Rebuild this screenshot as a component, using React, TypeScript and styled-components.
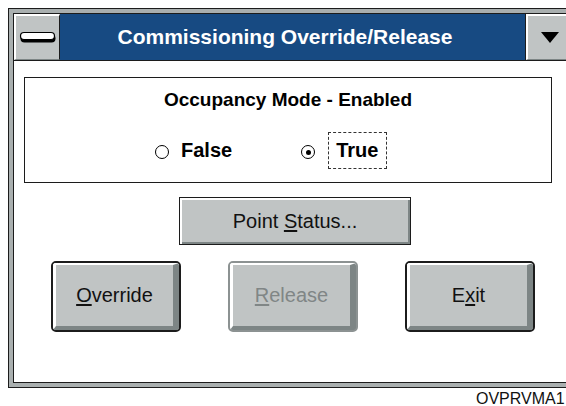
import styled, { createGlobalStyle } from "styled-components";

const COLORS = {
  DARK: "#1c1c1c",
  FRAME: "#a9afaf",
  FACE: "#c0c4c4",
  SHADOW: "#7d8585",
  TITLE: "#174a82",
  DISABLED: "#808686",
};

const GlobalStyle = createGlobalStyle`
  html, body {
    margin: 0;
    padding: 0;
    background: #fff;
    overflow: hidden;
  }
  body {
    font-family: "Liberation Sans", Arial, sans-serif;
  }
`;

const Stage = styled.div`
  padding: 8px 0 0 8px;
  width: 600px;
`;

const Window = styled.div`
  width: 570px;
  height: 380px;
  box-sizing: border-box;
  border: 1px solid ${COLORS.DARK};
  background: ${COLORS.FRAME};
  padding: 4px;
`;

const Inner = styled.div`
  height: 100%;
  box-sizing: border-box;
  border: 1px solid ${COLORS.DARK};
  background: #fff;
  display: flex;
  flex-direction: column;
`;

const TitleBar = styled.div`
  display: flex;
  height: 46px;
  border-bottom: 1px solid ${COLORS.DARK};
`;

const TitleButton = styled.div<{ $side: "left" | "right" }>`
  width: 46px;
  flex: none;
  box-sizing: border-box;
  background: ${COLORS.FACE};
  border-top: 2px solid #fff;
  border-left: 2px solid #fff;
  border-bottom: 1px solid ${COLORS.SHADOW};
  ${(p) =>
    p.$side === "left"
      ? `border-right: 1px solid ${COLORS.DARK};`
      : `border-right: 1px solid ${COLORS.SHADOW}; box-shadow: -1px 0 0 ${COLORS.DARK};`}
  display: flex;
  align-items: center;
  justify-content: center;
`;

const Title = styled.div`
  flex: 1;
  background: ${COLORS.TITLE};
  color: #fff;
  font-weight: 700;
  font-size: 21px;
  display: flex;
  align-items: center;
  justify-content: center;
  padding-right: 16px;
`;

const Content = styled.div`
  flex: 1;
  padding: 16px 10px 0;
  display: flex;
  flex-direction: column;
`;

const GroupBox = styled.div`
  width: 528px;
  box-sizing: border-box;
  border: 1px solid ${COLORS.DARK};
  padding: 10px 0 13px;
`;

const Heading = styled.div`
  font-weight: 700;
  font-size: 19px;
  line-height: 24px;
  text-align: center;
  color: #000;
`;

const RadioRow = styled.div`
  display: flex;
  align-items: center;
  margin-top: 20px;
  padding-left: 130px;
  height: 37px;
`;

const RadioItem = styled.label<{ $gap: number }>`
  display: flex;
  align-items: center;
  gap: ${(p) => p.$gap}px;
  font-weight: 700;
  font-size: 20px;
  color: #000;
  margin-right: 69px;
`;

const RadioCircle = styled.span<{ $checked?: boolean }>`
  width: 14px;
  height: 14px;
  box-sizing: border-box;
  border: 1px solid #000;
  border-radius: 50%;
  background: #fff;
  display: flex;
  align-items: center;
  justify-content: center;
  margin-top: 3px;
  &::after {
    content: "";
    display: ${(p) => (p.$checked ? "block" : "none")};
    width: 5px;
    height: 5px;
    border-radius: 50%;
    background: #000;
  }
`;

const FocusBox = styled.span`
  border: 1px dashed #333;
  padding: 5px 8px 5px 7px;
  line-height: 25px;
`;

const Underline = styled.span`
  text-decoration: underline;
  text-underline-offset: 2px;
`;

const StatusButton = styled.button`
  margin: 14px 0 0 155px;
  width: 232px;
  height: 48px;
  box-sizing: border-box;
  border: 1px solid ${COLORS.DARK};
  background: ${COLORS.FACE};
  box-shadow: inset 2px 2px 0 #fff, inset -2px -2px 0 ${COLORS.SHADOW};
  font-family: inherit;
  font-size: 20px;
  color: #111;
  padding: 0;
  cursor: pointer;
`;

const ButtonRow = styled.div`
  display: flex;
  gap: 47px;
  margin-top: 16px;
  padding-left: 27px;
`;

const BigButton = styled.button<{ $disabled?: boolean }>`
  width: 130px;
  height: 71px;
  box-sizing: border-box;
  padding: 0;
  border: 2px solid ${(p) => (p.$disabled ? "#8c9292" : COLORS.DARK)};
  border-radius: 5px;
  background: ${COLORS.FACE};
  display: flex;
  overflow: hidden;
  cursor: ${(p) => (p.$disabled ? "default" : "pointer")};
`;

const BigFace = styled.span<{ $disabled?: boolean }>`
  flex: 1;
  display: flex;
  align-items: center;
  justify-content: center;
  border-top: 2px solid #fff;
  border-left: 3px solid #fff;
  border-right: 6px solid ${COLORS.SHADOW};
  border-bottom: 4px solid ${COLORS.SHADOW};
  font-family: "Liberation Sans", Arial, sans-serif;
  font-size: 20px;
  color: ${(p) => (p.$disabled ? COLORS.DISABLED : "#111")};
`;

const Caption = styled.div`
  margin: 2px 0 0 468px;
  font-size: 16px;
  line-height: 18px;
  color: #111;
  white-space: nowrap;
`;

const MenuIcon = () => (
  <svg width="38" height="14" viewBox="0 0 38 14">
    <rect x="1.5" y="3.5" width="35" height="8" rx="4" fill="#000" />
    <rect x="1.5" y="1.5" width="34" height="7" rx="3.5" fill="#fff" stroke="#000" strokeWidth="1.2" />
  </svg>
);

const DropIcon = () => (
  <svg width="18" height="12" viewBox="0 0 18 12">
    <polygon points="0,0 18,0 9,11" fill="#000" />
  </svg>
);

const App = () => {
  return (
    <Stage>
      <GlobalStyle />
      <Window>
        <Inner>
          <TitleBar>
            <TitleButton $side="left">
              <MenuIcon />
            </TitleButton>
            <Title>Commissioning Override/Release</Title>
            <TitleButton $side="right">
              <DropIcon />
            </TitleButton>
          </TitleBar>
          <Content>
            <GroupBox>
              <Heading>Occupancy Mode - Enabled</Heading>
              <RadioRow>
                <RadioItem $gap={12}>
                  <RadioCircle />
                  <span>False</span>
                </RadioItem>
                <RadioItem $gap={13}>
                  <RadioCircle $checked />
                  <FocusBox>True</FocusBox>
                </RadioItem>
              </RadioRow>
            </GroupBox>
            <StatusButton>
              Point <Underline>S</Underline>tatus...
            </StatusButton>
            <ButtonRow>
              <BigButton>
                <BigFace>
                  <Underline>O</Underline>verride
                </BigFace>
              </BigButton>
              <BigButton $disabled>
                <BigFace $disabled>
                  <Underline>R</Underline>elease
                </BigFace>
              </BigButton>
              <BigButton>
                <BigFace>
                  E<Underline>x</Underline>it
                </BigFace>
              </BigButton>
            </ButtonRow>
          </Content>
        </Inner>
      </Window>
      <Caption>OVPRVMA1</Caption>
    </Stage>
  );
};

export default App;
